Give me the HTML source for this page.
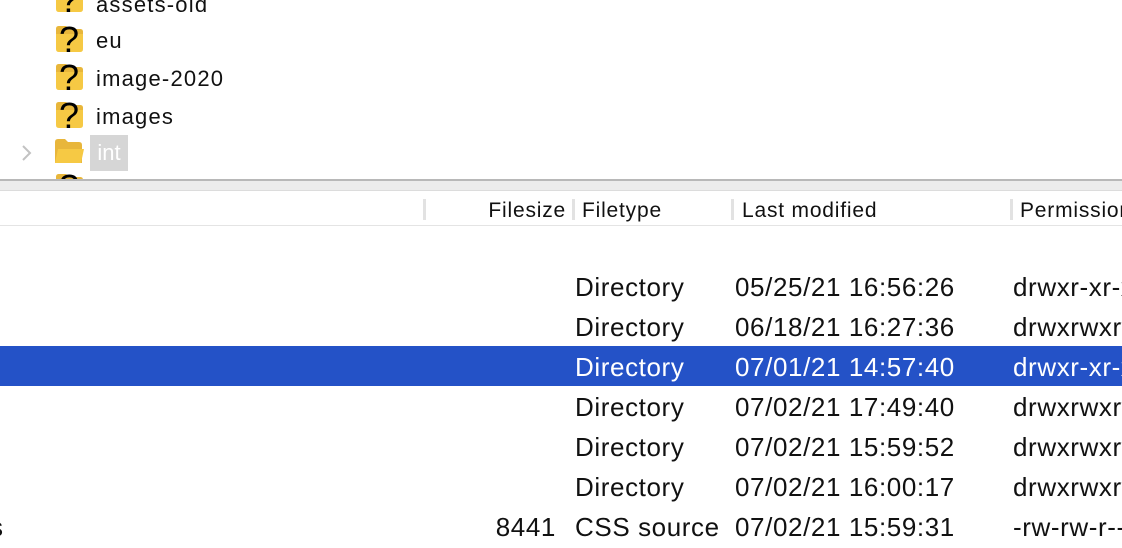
<!DOCTYPE html>
<html><head><style>
body{margin:0;width:1122px;height:548px;overflow:hidden;background:#fff;font-family:"Liberation Sans",sans-serif;position:relative;color:#111}
.a{position:absolute;white-space:nowrap}
.t{font-size:22px;letter-spacing:1.2px;left:96px}
.ic{position:absolute;left:56px;width:27px;height:26px}
.r{position:absolute;left:0;width:1122px;height:40px;font-size:26px;letter-spacing:0.6px;line-height:42px}
.r span{position:absolute;white-space:nowrap}
.sel{background:#2452c7;color:#fff}
.h{font-size:21px;letter-spacing:0.8px;top:199px}
.sep{position:absolute;top:199px;width:3px;height:21px;background:#e2e2e2}
</style></head><body>
<svg width="0" height="0" style="position:absolute"><defs>
<g id="q"><path d="M0 3 Q0 0 3 0 H10 L13 3 H24 Q27 3 27 6 V23 Q27 26 24 26 H3 Q0 26 0 23Z" fill="#f6c944"/><path d="M0 3 Q0 0 3 0 H10 L13 3 H24 Q27 3 27 6 V8 H0Z" fill="#e8b63b"/><text x="13" y="26" font-family="Liberation Sans" font-size="36" text-anchor="middle" fill="#000">?</text></g>
</defs></svg>
<svg class="ic" style="top:-14px" viewBox="0 0 27 26" overflow="visible"><use href="#q"/></svg>
<div class="a t" style="top:-8px">assets-old</div>
<svg class="ic" style="top:26px" viewBox="0 0 27 26" overflow="visible"><use href="#q"/></svg>
<div class="a t" style="top:28px">eu</div>
<svg class="ic" style="top:64px" viewBox="0 0 27 26" overflow="visible"><use href="#q"/></svg>
<div class="a t" style="top:66px">image-2020</div>
<svg class="ic" style="top:102px" viewBox="0 0 27 26" overflow="visible"><use href="#q"/></svg>
<div class="a t" style="top:104px">images</div>
<svg class="a" style="left:20px;top:144px" width="14" height="18"><path d="M3 2 L10 9 L3 16" stroke="#c2c2c2" stroke-width="2" fill="none"/></svg>
<svg class="a" style="left:55px;top:139px" width="30" height="26"><path d="M0 3 Q0 0 3 0 H10 L13 3 H24 Q27 3 27 6 V24 H0Z" fill="#e8b63b"/><path d="M3 10 H29 L26 24 H0Z" fill="#f6c944"/></svg>
<div class="a" style="left:90px;top:135px;width:38px;height:36px;background:#d6d6d6;color:#fff;font-size:22px;line-height:36px;text-align:center">int</div>
<svg class="ic" style="top:174px;height:6px;overflow:hidden" viewBox="0 0 27 6"><use href="#q"/></svg>
<div class="a" style="left:0;top:179px;width:1122px;height:2px;background:#b8b8b8"></div>
<div class="a" style="left:0;top:181px;width:1122px;height:9px;background:#ececec;border-bottom:1px solid #dcdcdc"></div>
<div class="a" style="left:0;top:225px;width:1122px;height:1px;background:#e4e4e4"></div>
<div class="sep" style="left:423px"></div>
<div class="sep" style="left:572px"></div>
<div class="sep" style="left:731px"></div>
<div class="sep" style="left:1010px"></div>
<div class="a h" style="right:556px">Filesize</div>
<div class="a h" style="left:582px">Filetype</div>
<div class="a h" style="left:742px">Last modified</div>
<div class="a h" style="left:1020px">Permissions</div>
<div class="r" style="top:266px"><span style="left:575px">Directory</span><span style="left:735px">05/25/21 16:56:26</span><span style="left:1013px">drwxr-xr-x</span></div>
<div class="r" style="top:306px"><span style="left:575px">Directory</span><span style="left:735px">06/18/21 16:27:36</span><span style="left:1013px">drwxrwxrwx</span></div>
<div class="r sel" style="top:346px"><span style="left:575px">Directory</span><span style="left:735px">07/01/21 14:57:40</span><span style="left:1013px">drwxr-xr-x</span></div>
<div class="r" style="top:386px"><span style="left:575px">Directory</span><span style="left:735px">07/02/21 17:49:40</span><span style="left:1013px">drwxrwxrwx</span></div>
<div class="r" style="top:426px"><span style="left:575px">Directory</span><span style="left:735px">07/02/21 15:59:52</span><span style="left:1013px">drwxrwxrwx</span></div>
<div class="r" style="top:466px"><span style="left:575px">Directory</span><span style="left:735px">07/02/21 16:00:17</span><span style="left:1013px">drwxrwxrwx</span></div>
<div class="r" style="top:506px"><span style="left:-10px">s</span><span style="right:566px">8441</span><span style="left:575px">CSS source</span><span style="left:735px">07/02/21 15:59:31</span><span style="left:1013px">-rw-rw-r--</span></div>
</body></html>
